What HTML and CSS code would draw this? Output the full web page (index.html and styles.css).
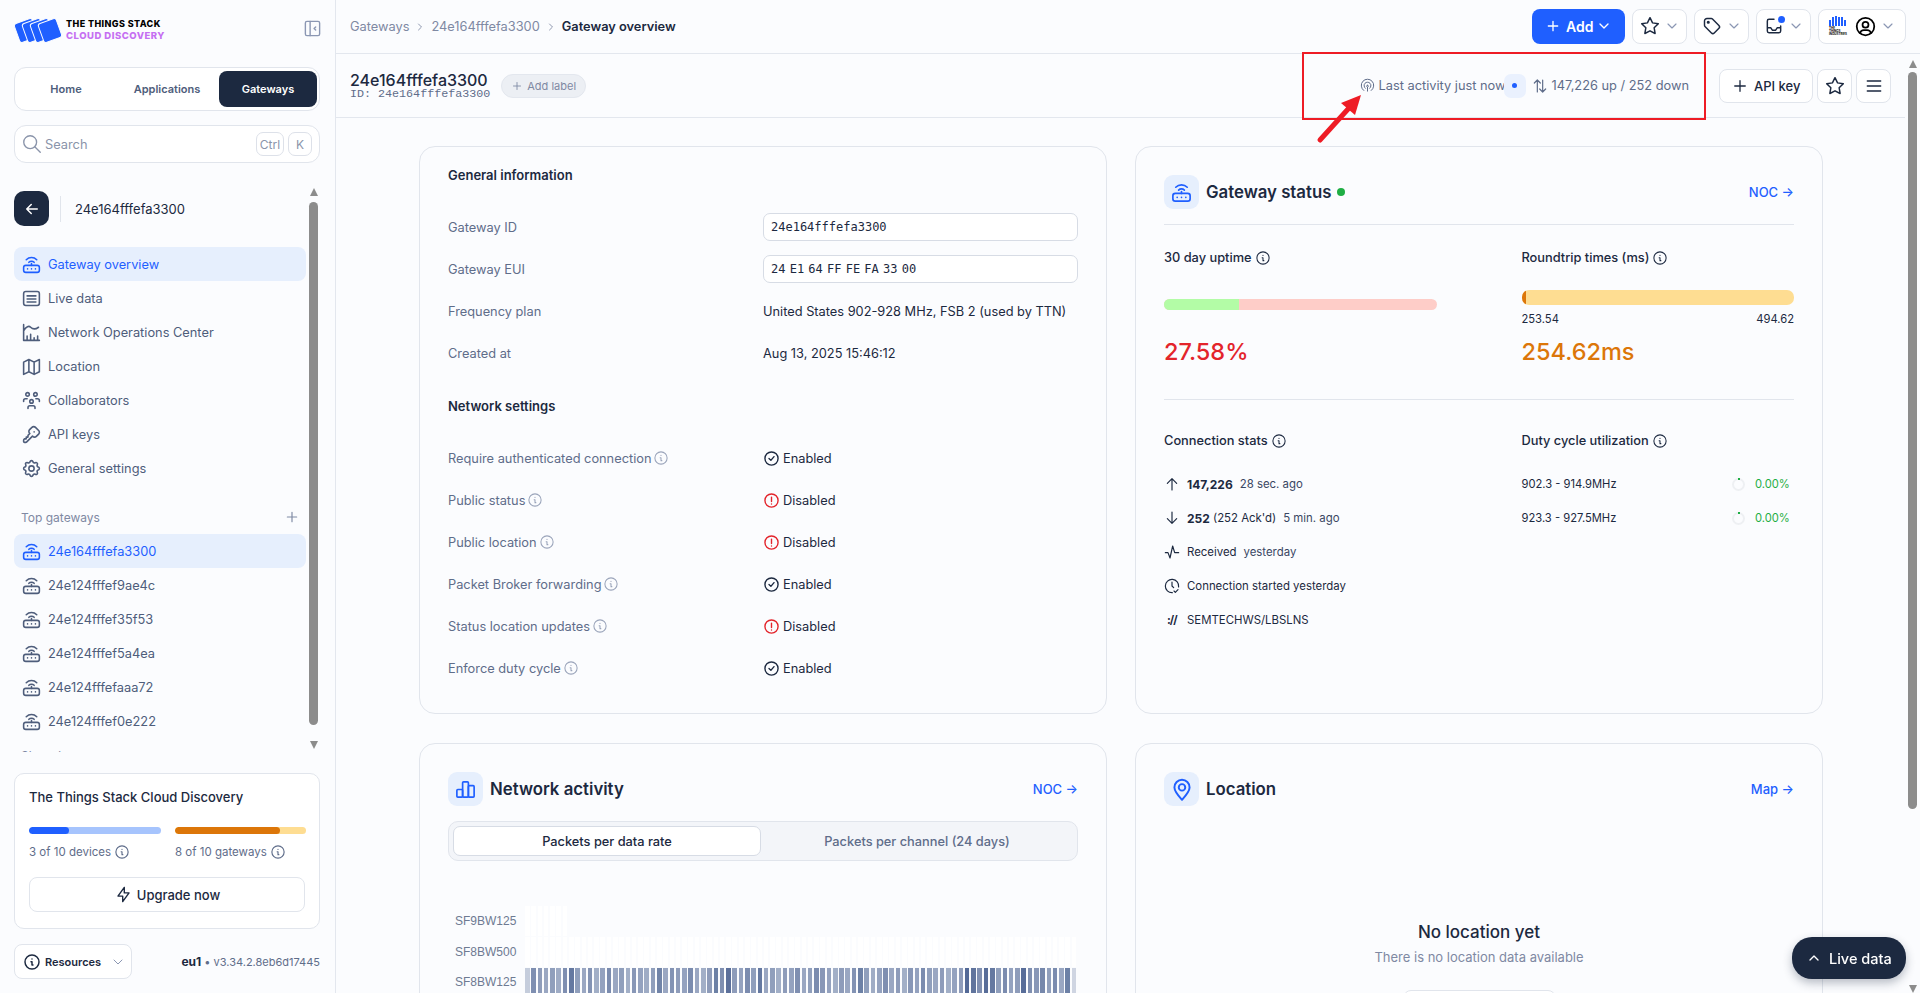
FILE: index.html
```html
<!DOCTYPE html>
<html lang="en">
<head>
    <meta charset="UTF-8">
    <meta name="viewport" content="width=device-width, initial-scale=1.0">
    <title>Gateway overview</title>
    <link rel="stylesheet" href="styles.css">
</head>
<body>

    <svg class="sprite" aria-hidden="true">
        <symbol id="i-router" viewBox="0 0 24 24"><rect x="3" y="13" width="18" height="8" rx="2.5"/><path d="M7.5 17h.01M12 17h.01M16.500 17h.01M12 13v-2M9 9.500a4.200 4.200 0 0 1 6 0M6 6.500a8.500 8.500 0 0 1 12 0"/></symbol>
        <symbol id="i-list" viewBox="0 0 24 24"><rect x="3" y="4" width="18" height="16" rx="2.500"/><path d="M7 9h10M7 12.500h10M7 16h10"/></symbol>
        <symbol id="i-noc" viewBox="0 0 24 24"><path d="M3 3v18h18M7 21v-5M11 21v-7M15 21v-3M19 21v-5M3 10c3-5 6-6 8-4s5 3 9 0"/></symbol>
        <symbol id="i-map" viewBox="0 0 24 24"><path d="M3 7l6-3 6 3 6-3v14l-6 3-6-3-6 3zM9 4v14M15 7v14"/></symbol>
        <symbol id="i-users" viewBox="0 0 24 24"><circle cx="12" cy="13" r="2"/><path d="M8 21v-1a2 2 0 0 1 2-2h4a2 2 0 0 1 2 2v1"/><circle cx="7.500" cy="5" r="2"/><circle cx="16.500" cy="5" r="2"/><path d="M3 13v-1a2 2 0 0 1 2-2h2M21 13v-1a2 2 0 0 0-2-2h-2"/></symbol>
        <symbol id="i-key" viewBox="0 0 24 24"><path d="M16.555 3.843l3.602 3.602a2.877 2.877 0 0 1 0 4.069l-2.643 2.643a2.877 2.877 0 0 1-4.069 0l-.301-.301-6.558 6.558a2 2 0 0 1-1.239.578l-.175.008h-1.172a1 1 0 0 1-.993-.883l-.007-.117v-1.172a2 2 0 0 1 .467-1.284l.119-.135.414-.414h2v-2h2v-2l2.144-2.144-.301-.301a2.877 2.877 0 0 1 0-4.069l2.643-2.643a2.877 2.877 0 0 1 4.069 0zM15 9h.01"/></symbol>
        <symbol id="i-gear" viewBox="0 0 24 24"><path d="M10.325 4.317c.426-1.756 2.924-1.756 3.350 0a1.724 1.724 0 0 0 2.573 1.066c1.543-.94 3.310.826 2.370 2.370a1.724 1.724 0 0 0 1.065 2.572c1.756.426 1.756 2.924 0 3.350a1.724 1.724 0 0 0-1.066 2.573c.94 1.543-.826 3.310-2.370 2.370a1.724 1.724 0 0 0-2.572 1.065c-.426 1.756-2.924 1.756-3.350 0a1.724 1.724 0 0 0-2.573-1.066c-1.543.94-3.310-.826-2.370-2.370a1.724 1.724 0 0 0-1.065-2.572c-1.756-.426-1.756-2.924 0-3.350a1.724 1.724 0 0 0 1.066-2.573c-.94-1.543.826-3.310 2.370-2.370 1 .608 2.296.07 2.572-1.065z"/><circle cx="12" cy="12" r="3"/></symbol>
        <symbol id="i-info" viewBox="0 0 24 24"><circle cx="12" cy="12" r="10.500"/><path d="M12 7.500h.01M10.500 11.500H12v5h1.500"/></symbol>
        <symbol id="i-check" viewBox="0 0 24 24"><circle cx="12" cy="12" r="10.500"/><path d="M8 12l3 3 5-6"/></symbol>
        <symbol id="i-alert" viewBox="0 0 24 24"><circle cx="12" cy="12" r="10.500"/><path d="M12 6.500v7M12 17.500h.01"/></symbol>
        <symbol id="i-plus" viewBox="0 0 24 24"><path d="M12 5v14M5 12h14"/></symbol>
        <symbol id="i-chev" viewBox="0 0 24 24"><path d="M6 9l6 6 6-6"/></symbol>
        <symbol id="i-chevr" viewBox="0 0 24 24"><path d="M9 6l6 6-6 6"/></symbol>
        <symbol id="i-star" viewBox="0 0 24 24"><path d="M12 17.750l-6.172 3.245 1.179-6.873-5-4.867 6.900-1 3.086-6.253 3.086 6.253 6.900 1-5 4.867 1.179 6.873z"/></symbol>
        <symbol id="i-tag" viewBox="0 0 24 24"><circle cx="7.500" cy="7.500" r="1"/><path d="M3 6v5.172a2 2 0 0 0 .586 1.414l7.710 7.710a2.410 2.410 0 0 0 3.408 0l5.592-5.592a2.410 2.410 0 0 0 0-3.408l-7.710-7.710a2 2 0 0 0-1.414-.586h-5.172a3 3 0 0 0-3 3z"/></symbol>
        <symbol id="i-inbox" viewBox="0 0 24 24"><path d="M12 4H6a2 2 0 0 0-2 2v12a2 2 0 0 0 2 2h12a2 2 0 0 0 2-2v-6M4 14h4l2 3h4l2-3h4"/></symbol>
        <symbol id="i-user" viewBox="0 0 24 24"><circle cx="12" cy="12" r="10"/><circle cx="12" cy="10" r="3.400"/><path d="M5.800 19.500c.6-2.300 2.200-3.500 4.200-3.500h4c2 0 3.600 1.200 4.200 3.500"/></symbol>
        <symbol id="i-menu" viewBox="0 0 24 24"><path d="M4 6h16M4 12h16M4 18h16"/></symbol>
        <symbol id="i-signal" viewBox="0 0 24 24"><path d="M6 20a10 10 0 1 1 12 0M8.500 16.500a5.500 5.500 0 1 1 7 0"/><path d="M12 11.500a1.500 1.500 0 0 1 1 2.500M11 14a1.500 1.500 0 0 1 1-2.500M12 15v6"/></symbol>
        <symbol id="i-updown" viewBox="0 0 24 24"><path d="M8 21V3M3.500 7.500L8 3l4.500 4.500M16 3v18M11.500 16.500L16 21l4.500-4.500"/></symbol>
        <symbol id="i-up" viewBox="0 0 24 24"><path d="M12 21V4M5 11l7-7 7 7"/></symbol>
        <symbol id="i-down" viewBox="0 0 24 24"><path d="M12 3v17M5 13l7 7 7-7"/></symbol>
        <symbol id="i-pulse" viewBox="0 0 24 24"><path d="M2 13h4l3 8 4-18 3 10h6"/></symbol>
        <symbol id="i-clock" viewBox="0 0 24 24"><path d="M21.900 13.500a10 10 0 1 0-9.400 8.500M12 6v6l2.500 2.500M15 19.500l2 2 4-4"/></symbol>
        <symbol id="i-search" viewBox="0 0 24 24"><circle cx="10" cy="10" r="7"/><path d="M21 21l-6-6"/></symbol>
        <symbol id="i-left" viewBox="0 0 24 24"><path d="M5 12h14M5 12l6-6M5 12l6 6"/></symbol>
        <symbol id="i-bolt" viewBox="0 0 24 24"><path d="M13 3v7h6l-8 11v-7H5z"/></symbol>
        <symbol id="i-bars" viewBox="0 0 24 24"><rect x="3" y="12" width="6" height="8" rx="1"/><rect x="9" y="4" width="6" height="16" rx="1"/><rect x="15" y="8" width="6" height="12" rx="1"/></symbol>
        <symbol id="i-pin" viewBox="0 0 24 24"><circle cx="12" cy="10.500" r="3"/><path d="M12 22c-4-4.500-7-8-7-11.500a7 7 0 0 1 14 0C19 14 16 17.500 12 22z"/></symbol>
        <symbol id="i-panel" viewBox="0 0 24 24"><rect x="3" y="3" width="18" height="18" rx="2"/><path d="M9 3v18M16 10l-2 2 2 2"/></symbol>
    </svg>

    <div class="app">

        <aside class="sidebar">
            <div class="brand">
                <div class="logo">
                    <i class="logoCard"></i><i class="logoCard"></i><i class="logoCard"></i><i class="logoCard"></i>
                </div>
                <div class="brandText">
                    <p>THE THINGS STACK</p>
                    <p class="brandSub">CLOUD DISCOVERY</p>
                </div>
                <svg class="ico collapse"><use href="#i-panel"/></svg>
            </div>

            <div class="tabs">
                <p>Home</p>
                <p>Applications</p>
                <p class="tabOn">Gateways</p>
            </div>

            <div class="search">
                <svg class="ico searchIco"><use href="#i-search"/></svg>
                <span class="searchText">Search</span>
                <kbd class="kbdCtrl">Ctrl</kbd>
                <kbd class="kbdK">K</kbd>
            </div>

            <div class="sideScroll">
                <div class="sideList">
                    <div class="backRow">
                        <div class="backBtn"><svg class="ico"><use href="#i-left"/></svg></div>
                        <span>24e164fffefa3300</span>
                    </div>

                    <nav class="nav">
                        <a class="navItem navOn"><svg class="ico"><use href="#i-router"/></svg>Gateway overview</a>
                        <a class="navItem"><svg class="ico"><use href="#i-list"/></svg>Live data</a>
                        <a class="navItem"><svg class="ico"><use href="#i-noc"/></svg>Network Operations Center</a>
                        <a class="navItem"><svg class="ico"><use href="#i-map"/></svg>Location</a>
                        <a class="navItem"><svg class="ico"><use href="#i-users"/></svg>Collaborators</a>
                        <a class="navItem"><svg class="ico"><use href="#i-key"/></svg>API keys</a>
                        <a class="navItem"><svg class="ico"><use href="#i-gear"/></svg>General settings</a>
                    </nav>

                    <div class="navHead">
                        <span>Top gateways</span>
                        <svg class="ico"><use href="#i-plus"/></svg>
                    </div>

                    <nav class="nav">
                        <a class="navItem navOn"><svg class="ico"><use href="#i-router"/></svg>24e164fffefa3300</a>
                        <a class="navItem"><svg class="ico"><use href="#i-router"/></svg>24e124fffef9ae4c</a>
                        <a class="navItem"><svg class="ico"><use href="#i-router"/></svg>24e124fffef35f53</a>
                        <a class="navItem"><svg class="ico"><use href="#i-router"/></svg>24e124fffef5a4ea</a>
                        <a class="navItem"><svg class="ico"><use href="#i-router"/></svg>24e124fffefaaa72</a>
                        <a class="navItem"><svg class="ico"><use href="#i-router"/></svg>24e124fffef0e222</a>
                    </nav>

                    <div class="navHead navClip"><span>Shared</span></div>
                </div>

                <div class="rail railSide">
                    <i class="arrowUp"></i>
                    <i class="thumb thumbSide"></i>
                    <i class="arrowDown"></i>
                </div>
            </div>

            <div class="plan">
                <p class="planTitle">The Things Stack Cloud Discovery</p>
                <div class="planBars">
                    <div>
                        <div class="meter meterBlue"><i class="meterFill meterDevices"></i></div>
                        <p class="planNote">3 of 10 devices <svg class="ico"><use href="#i-info"/></svg></p>
                    </div>
                    <div>
                        <div class="meter meterOrange"><i class="meterFill meterGateways"></i></div>
                        <p class="planNote">8 of 10 gateways <svg class="ico"><use href="#i-info"/></svg></p>
                    </div>
                </div>
                <div class="upgrade"><svg class="ico"><use href="#i-bolt"/></svg>Upgrade now</div>
            </div>

            <div class="sideFoot">
                <div class="resources">
                    <svg class="ico"><use href="#i-info"/></svg>
                    <span>Resources</span>
                    <svg class="ico chev"><use href="#i-chev"/></svg>
                </div>
                <p class="version"><b>eu1</b> • v3.34.2.8eb6d17445</p>
            </div>
        </aside>

        <div class="main">
            <header class="topbar">
                <div class="crumbs">
                    <span>Gateways</span>
                    <svg class="ico"><use href="#i-chevr"/></svg>
                    <span>24e164fffefa3300</span>
                    <svg class="ico"><use href="#i-chevr"/></svg>
                    <b>Gateway overview</b>
                </div>
                <div class="topBtns">
                    <div class="addBtn"><svg class="ico"><use href="#i-plus"/></svg>Add<svg class="ico"><use href="#i-chev"/></svg></div>
                    <div class="iconBtn"><svg class="ico big"><use href="#i-star"/></svg><svg class="ico chev"><use href="#i-chev"/></svg></div>
                    <div class="iconBtn"><svg class="ico big"><use href="#i-tag"/></svg><svg class="ico chev"><use href="#i-chev"/></svg></div>
                    <div class="iconBtn inbox"><svg class="ico big"><use href="#i-inbox"/></svg><i class="inboxDot"></i><svg class="ico chev"><use href="#i-chev"/></svg></div>
                    <div class="iconBtn userBtn">
                        <div class="org">
                            <div class="orgBars"><i></i><i></i><i></i><i></i><i></i><i></i></div>
                            <p>THE THINGS INDUSTRIES</p>
                        </div>
                        <svg class="ico big userIco"><use href="#i-user"/></svg>
                        <svg class="ico chev"><use href="#i-chev"/></svg>
                    </div>
                </div>
            </header>

            <div class="body">
                <div class="page">
                    <div class="pageBar">
                        <div class="pageId">
                            <h1>24e164fffefa3300</h1>
                            <p>ID: 24e164fffefa3300</p>
                        </div>
                        <div class="addLabel"><svg class="ico"><use href="#i-plus"/></svg>Add label</div>
                        <div class="activity">
                            <svg class="ico signal"><use href="#i-signal"/></svg>
                            <span>Last activity just now</span>
                            <span class="halo"><i></i></span>
                            <svg class="ico updown"><use href="#i-updown"/></svg>
                            <span>147,226 up / 252 down</span>
                        </div>
                        <div class="apiBtn"><svg class="ico"><use href="#i-plus"/></svg>API key</div>
                        <div class="squareBtn"><svg class="ico"><use href="#i-star"/></svg></div>
                        <div class="squareBtn"><svg class="ico"><use href="#i-menu"/></svg></div>
                    </div>

                    <div class="cards">
                        <section class="card cardInfo">
                            <h3>General information</h3>
                            <div class="rows">
                                <div class="row"><span>Gateway ID</span><div class="copyBox">24e164fffefa3300</div></div>
                                <div class="row"><span>Gateway EUI</span><div class="copyBox">24 E1 64 FF FE FA 33 00</div></div>
                                <div class="row"><span>Frequency plan</span><p>United States 902-928 MHz, FSB 2 (used by TTN)</p></div>
                                <div class="row"><span>Created at</span><p>Aug 13, 2025 15:46:12</p></div>
                            </div>
                            <h3 class="secondHead">Network settings</h3>
                            <div class="rows">
                                <div class="row"><span>Require authenticated connection <svg class="ico"><use href="#i-info"/></svg></span><p class="flag"><svg class="ico"><use href="#i-check"/></svg>Enabled</p></div>
                                <div class="row"><span>Public status <svg class="ico"><use href="#i-info"/></svg></span><p class="flag flagOff"><svg class="ico"><use href="#i-alert"/></svg>Disabled</p></div>
                                <div class="row"><span>Public location <svg class="ico"><use href="#i-info"/></svg></span><p class="flag flagOff"><svg class="ico"><use href="#i-alert"/></svg>Disabled</p></div>
                                <div class="row"><span>Packet Broker forwarding <svg class="ico"><use href="#i-info"/></svg></span><p class="flag"><svg class="ico"><use href="#i-check"/></svg>Enabled</p></div>
                                <div class="row"><span>Status location updates <svg class="ico"><use href="#i-info"/></svg></span><p class="flag flagOff"><svg class="ico"><use href="#i-alert"/></svg>Disabled</p></div>
                                <div class="row"><span>Enforce duty cycle <svg class="ico"><use href="#i-info"/></svg></span><p class="flag"><svg class="ico"><use href="#i-check"/></svg>Enabled</p></div>
                            </div>
                        </section>

                        <section class="card">
                            <div class="cardHead headLine">
                                <div class="headIco"><svg class="ico"><use href="#i-router"/></svg></div>
                                <h2>Gateway status</h2>
                                <i class="greenDot"></i>
                                <a class="cardLink">NOC →</a>
                            </div>
                            <div class="stats statsTop">
                                <div>
                                    <p class="statHead">30 day uptime <svg class="ico"><use href="#i-info"/></svg></p>
                                    <div class="uptime"><i></i></div>
                                    <p class="bigNum red">27.58%</p>
                                </div>
                                <div>
                                    <p class="statHead">Roundtrip times (ms) <svg class="ico"><use href="#i-info"/></svg></p>
                                    <div class="rtt"><i></i></div>
                                    <div class="rttEnds"><span>253.54</span><span>494.62</span></div>
                                    <p class="bigNum orange">254.62ms</p>
                                </div>
                            </div>
                            <div class="stats">
                                <div>
                                    <p class="statHead">Connection stats <svg class="ico"><use href="#i-info"/></svg></p>
                                    <div class="connList">
                                        <p><svg class="ico"><use href="#i-up"/></svg><b>147,226</b><span class="gapL">28 sec. ago</span></p>
                                        <p><svg class="ico"><use href="#i-down"/></svg><b>252</b>&nbsp;(252 Ack'd)<span class="gapL">5 min. ago</span></p>
                                        <p><svg class="ico"><use href="#i-pulse"/></svg>Received<span class="gapL">yesterday</span></p>
                                        <p><svg class="ico"><use href="#i-clock"/></svg>Connection started yesterday</p>
                                        <p><span class="proto">://</span>SEMTECHWS/LBSLNS</p>
                                    </div>
                                </div>
                                <div>
                                    <p class="statHead">Duty cycle utilization <svg class="ico"><use href="#i-info"/></svg></p>
                                    <div class="connList">
                                        <p class="duty"><span>902.3 - 914.9MHz</span><i class="ring"></i><span class="dutyPct">0.00%</span></p>
                                        <p class="duty"><span>923.3 - 927.5MHz</span><i class="ring"></i><span class="dutyPct">0.00%</span></p>
                                    </div>
                                </div>
                            </div>
                        </section>

                        <section class="card">
                            <div class="cardHead">
                                <div class="headIco"><svg class="ico"><use href="#i-bars"/></svg></div>
                                <h2>Network activity</h2>
                                <a class="cardLink">NOC →</a>
                            </div>
                            <div class="switcher">
                                <p class="switchOn">Packets per data rate</p>
                                <p>Packets per channel (24 days)</p>
                            </div>
                            <div class="heat">
                                <div class="heatLabels">
                                    <span>SF9BW125</span>
                                    <span>SF8BW500</span>
                                    <span>SF8BW125</span>
                                </div>
                                <div class="heatGrid" id="heat"></div>
                            </div>
                        </section>

                        <section class="card">
                            <div class="cardHead">
                                <div class="headIco headPin"><svg class="ico"><use href="#i-pin"/></svg></div>
                                <h2>Location</h2>
                                <a class="cardLink">Map →</a>
                            </div>
                            <div class="empty">
                                <p class="emptyTitle">No location yet</p>
                                <p class="emptySub">There is no location data available</p>
                                <div class="emptyBtn">Add location</div>
                            </div>
                        </section>
                    </div>
                </div>

                <div class="rail railMain">
                    <i class="arrowUp"></i>
                    <i class="thumb thumbMain"></i>
                    <i class="arrowDown"></i>
                </div>
            </div>
        </div>
    </div>

    <div class="liveBtn"><svg class="ico"><use href="#i-chev"/></svg>Live data</div>

    <!-- annotation on the screenshot -->
    <div class="markBox"></div>
    <svg class="markArrow" viewBox="0 0 50 54">
        <path d="M4 50L33 18" stroke="#ee1c25" stroke-width="5" stroke-linecap="round"/>
        <path d="M45 5L25 13L39 25z" fill="#ee1c25"/>
    </svg>

    <script src="chart.js"></script>
</body>
</html>
```
FILE: styles.css
```css
* {
    box-sizing: border-box;
}

body {
    margin: 0px;
    height: 100vh;
    overflow: hidden;
    background-color: #fbfcfe;
    color: #1c2940;
    font-family: Inter, "Noto Sans", sans-serif;
    font-size: 12.8px;
}

p, h1, h2, h3 {
    margin: 0px;
}

i {
    display: block;
}

.sprite {
    display: none;
}

.ico {
    width: 16px;
    height: 16px;
    flex: none;
    fill: none;
    stroke: currentColor;
    stroke-width: 1.75;
    stroke-linecap: round;
    stroke-linejoin: round;
}

.app {
    display: flex;
    height: 100vh;
}

/* sidebar */
.sidebar {
    width: 336px;
    flex: none;
    padding: 0px 15px 0px 14px;
    border-right: 1px solid #e3e7ee;
    overflow: hidden;
}

.brand {
    display: flex;
    align-items: center;
    height: 67px;
    padding-bottom: 7px;
}

.logo {
    display: flex;
    width: 48px;
    padding-left: 2px;
}

.logoCard {
    width: 20px;
    height: 21px;
    margin-right: -12px;
    border-radius: 3px;
    border: 1px solid #fbfcfe;
    background-color: #1f5fff;
    transform: rotate(-20deg);
    flex: none;
}

.brandText {
    margin-left: 4px;
    font-size: 9px;
    font-weight: 800;
    line-height: 12.500px;
    letter-spacing: 0.4px;
    color: #000000;
}

.brandSub {
    font-size: 9.5px;
    letter-spacing: 0.500px;
    color: #c56ff2;
}

.collapse {
    margin-left: auto;
    width: 19px;
    height: 19px;
    color: #8b97b3;
    margin-top: -3px;
    margin-right: -2px;
}

.tabs {
    display: grid;
    grid-template-columns: 1fr 1fr 1fr;
    gap: 3px;
    height: 44px;
    padding: 3px 2px;
    border: 1px solid #e1e5ec;
    border-radius: 12px;
    background-color: #ffffff;
    font-size: 11px;
    font-weight: 600;
    color: #4e5d7b;
}

.tabs p {
    display: flex;
    align-items: center;
    justify-content: center;
    border-radius: 8px;
}

.tabs .tabOn {
    background-color: #1c2940;
    color: #ffffff;
}

.search {
    display: flex;
    align-items: center;
    gap: 2px;
    height: 38px;
    margin-top: 14px;
    padding: 0px 7px 0px 6px;
    border: 1px solid #e1e5ec;
    border-radius: 12px;
    background-color: #ffffff;
    color: #8a94aa;
}

.searchIco {
    width: 22px;
    height: 22px;
    stroke-width: 1.5;
}

.searchText {
    flex: 1;
}

kbd {
    display: flex;
    align-items: center;
    justify-content: center;
    height: 24px;
    margin-left: 2px;
    border: 1px solid #dde1e9;
    border-radius: 7px;
    font-family: Inter, sans-serif;
    font-size: 12px;
}

.kbdCtrl {
    width: 28px;
}

.kbdK {
    width: 24px;
}

.sideScroll {
    display: flex;
    height: 569px;
    margin-top: 20px;
    overflow: hidden;
}

.sideList {
    width: 292px;
    flex: none;
}

.backRow {
    display: flex;
    align-items: center;
    height: 35px;
    margin-top: 8px;
    font-size: 13px;
}

.backRow span {
    border-left: 1px solid #e1e5ec;
    height: 26px;
    line-height: 26px;
    margin-left: 11px;
    padding-left: 14px;
}

.backBtn {
    display: flex;
    align-items: center;
    justify-content: center;
    width: 35px;
    height: 35px;
    border-radius: 10px;
    background-color: #1c2940;
    color: #ffffff;
}

.backBtn .ico {
    width: 18px;
    height: 18px;
    stroke-width: 2;
}

.nav:first-of-type {
    margin-top: 21px;
}

.navItem {
    display: flex;
    align-items: center;
    gap: 8px;
    height: 34px;
    padding-left: 8px;
    border-radius: 8px;
    color: #4e5d7b;
}

.navItem .ico {
    width: 21px;
    height: 21px;
    margin: 0px -1.500px;
    stroke-width: 1.800;
}

.navOn {
    background-color: #e6effd;
    color: #1f5fff;
}

.navHead {
    display: flex;
    align-items: center;
    justify-content: space-between;
    height: 34px;
    margin-top: 15px;
    padding: 0px 6px 0px 7px;
    font-size: 12px;
    color: #7f89a3;
}

.navClip {
    margin-top: 0px;
}

.rail {
    position: relative;
    flex: none;
    display: flex;
    flex-direction: column;
    align-items: center;
}

.railSide {
    width: 9px;
    margin-left: 3px;
    padding-top: 5px;
}

.arrowUp {
    width: 0px;
    height: 0px;
    border-left: 4.5px solid transparent;
    border-right: 4.5px solid transparent;
    border-bottom: 8px solid #8c8c8c;
}

.arrowDown {
    width: 0px;
    height: 0px;
    border-left: 4.5px solid transparent;
    border-right: 4.5px solid transparent;
    border-top: 8px solid #8c8c8c;
}

.thumb {
    width: 9px;
    border-radius: 5px;
    background-color: #8c8c8c;
}

.thumbSide {
    height: 523px;
    margin: 6px 0px 16px;
}

.plan {
    height: 156px;
    margin-top: 21px;
    padding: 14px;
    border: 1px solid #e1e5ec;
    border-radius: 10px;
    background-color: #ffffff;
}

.planTitle {
    font-size: 13px;
    font-weight: 500;
    line-height: 18px;
}

.planBars {
    display: grid;
    grid-template-columns: 132px 131px;
    gap: 14px;
    margin-top: 21px;
}

.meter {
    height: 7px;
    border-radius: 4px;
    overflow: hidden;
}

.meterFill {
    height: 7px;
    border-radius: 4px;
}

.meterBlue {
    background-color: #a6c4fd;
}

.meterOrange {
    background-color: #fedd92;
}

.meterDevices {
    width: 30%;
    background-color: #1f5fff;
}

.meterGateways {
    width: 80%;
    background-color: #dc7609;
}

.planNote {
    display: flex;
    align-items: center;
    gap: 4px;
    margin-top: 11px;
    font-size: 11.500px;
    color: #5f6d8a;
}

.planNote .ico {
    width: 14px;
    height: 14px;
    stroke-width: 2;
}

.upgrade {
    display: flex;
    align-items: center;
    justify-content: center;
    gap: 4px;
    height: 35px;
    margin-top: 18px;
    border: 1px solid #e1e5ec;
    border-radius: 8px;
    font-size: 13px;
    font-weight: 500;
}

.upgrade .ico {
    width: 19px;
    height: 19px;
}

.sideFoot {
    display: flex;
    align-items: center;
    justify-content: space-between;
    margin-top: 15px;
}

.resources {
    display: flex;
    align-items: center;
    gap: 5px;
    width: 118px;
    height: 35px;
    padding-left: 9px;
    border: 1px solid #e1e5ec;
    border-radius: 8px;
    background-color: #ffffff;
    font-size: 11px;
    font-weight: 600;
}

.resources .ico {
    stroke-width: 2.200;
}

.chev {
    width: 16px;
    height: 16px;
    color: #8b97b3;
}

.resources .chev {
    margin-left: 4px;
    stroke-width: 1.500;
}

.version {
    font-size: 11px;
    color: #5f6d8a;
}

.version b {
    font-size: 12px;
    color: #1c2940;
}

/* main */
.main {
    flex: 1;
    display: flex;
    flex-direction: column;
    min-width: 0px;
}

.topbar {
    display: flex;
    align-items: center;
    justify-content: space-between;
    height: 54px;
    flex: none;
    padding-left: 14px;
    border-bottom: 1px solid #e3e7ee;
}

.crumbs {
    display: flex;
    align-items: center;
    gap: 5px;
    color: #7f89a3;
}

.crumbs .ico {
    width: 12px;
    height: 12px;
}

.crumbs b {
    font-weight: 600;
    color: #1c2940;
}

.topBtns {
    display: flex;
    gap: 7px;
    padding-right: 14px;
    padding-bottom: 1px;
}

.addBtn {
    display: flex;
    align-items: center;
    gap: 3px;
    width: 93px;
    height: 35px;
    padding-left: 13px;
    border-radius: 8px;
    background-color: #1f5fff;
    color: #ffffff;
    font-size: 14px;
    font-weight: 600;
}

.addBtn .ico {
    margin-right: 2px;
    stroke-width: 2;
}

.iconBtn {
    position: relative;
    display: flex;
    align-items: center;
    gap: 4px;
    width: 55px;
    height: 35px;
    padding-left: 7px;
    border: 1px solid #e1e5ec;
    border-radius: 8px;
    background-color: #ffffff;
}

.big {
    width: 20px;
    height: 20px;
}

.inboxDot {
    position: absolute;
    left: 21px;
    top: 6px;
    width: 7px;
    height: 7px;
    border-radius: 50%;
    background-color: #1f5fff;
}

.userBtn {
    width: 88px;
    padding-left: 10px;
}

.userIco {
    margin-left: 5px;
    width: 21px;
    height: 21px;
    color: #000000;
    stroke-width: 2;
}

.org {
    width: 17px;
    flex: none;
}

.orgBars {
    display: flex;
    align-items: flex-end;
    justify-content: space-between;
    height: 10px;
}

.orgBars i {
    width: 2px;
    height: 9px;
    background-color: #1f5fff;
}

.orgBars i:nth-child(1), .orgBars i:nth-child(6) {
    height: 6px;
}

.orgBars i:nth-child(3) {
    height: 10px;
}

.org p {
    font-size: 3px;
    line-height: 3px;
    margin-top: 1px;
    font-weight: 700;
    color: #000000;
}

.body {
    flex: 1;
    display: flex;
    min-height: 0px;
}

.page {
    flex: 1;
    min-width: 0px;
}

.railMain {
    width: 15px;
    padding-top: 6px;
}

.thumbMain {
    height: 737px;
    margin: 4px 0px 176px;
}

.pageBar {
    display: flex;
    align-items: center;
    height: 64px;
    padding: 0px 14px;
    border-bottom: 1px solid #e3e7ee;
}

.pageId h1 {
    font-size: 16px;
    font-weight: 500;
    line-height: 16px;
}

.pageId p {
    font-family: "Liberation Mono", monospace;
    font-size: 11.7px;
    line-height: 12px;
    color: #5f6d8a;
}

.addLabel {
    display: flex;
    align-items: center;
    gap: 4px;
    height: 24px;
    margin-left: 11px;
    padding: 0px 9px;
    border: 1px solid #e3e7ee;
    border-radius: 12px;
    background-color: #eceff4;
    font-size: 11px;
    color: #7f89a3;
}

.addLabel .ico {
    width: 12px;
    height: 12px;
}

.activity {
    display: flex;
    align-items: center;
    margin-left: auto;
    margin-right: 30px;
    color: #5f6d8a;
}

.signal {
    width: 15px;
    height: 15px;
    margin-right: 4px;
    stroke-width: 1.600;
}

.updown {
    width: 16px;
    height: 16px;
    margin-right: 4px;
    stroke-width: 1.800;
}

.halo {
    display: flex;
    align-items: center;
    justify-content: center;
    width: 22px;
    height: 24px;
    margin: 0px 6px 0px -2px;
    border-radius: 7px;
    background-color: #eaf1fe;
}

.halo i {
    width: 5px;
    height: 5px;
    border-radius: 50%;
    background-color: #1f5fff;
}

.apiBtn {
    display: flex;
    align-items: center;
    gap: 5px;
    width: 94px;
    height: 34px;
    padding-left: 11px;
    border: 1px solid #e1e5ec;
    border-radius: 8px;
    background-color: #ffffff;
    font-size: 13px;
    font-weight: 500;
}

.apiBtn .ico {
    width: 18px;
    height: 18px;
}

.squareBtn {
    display: flex;
    align-items: center;
    justify-content: center;
    width: 35px;
    height: 34px;
    margin-left: 4px;
    border: 1px solid #e1e5ec;
    border-radius: 8px;
    background-color: #ffffff;
}

.squareBtn .ico {
    width: 20px;
    height: 20px;
}

.cards {
    display: grid;
    grid-template-columns: 688px 688px;
    gap: 29px 28px;
    padding-top: 28px;
    padding-left: 83px;
}

.card {
    padding: 28px 28px 0px;
    border: 1px solid #e1e5ec;
    border-radius: 16px;
}

.cardInfo {
    height: 568px;
    padding-top: 18px;
}

.card h3 {
    font-size: 13px;
    font-weight: 600;
    line-height: 20px;
}

.card .secondHead {
    margin-top: 22px;
}

.rows {
    margin-top: 21px;
}

.row {
    display: grid;
    grid-template-columns: 315px 315px;
    align-items: center;
    height: 42px;
}

.row span {
    display: flex;
    align-items: center;
    gap: 3px;
    color: #5f6d8a;
}

.row span .ico {
    width: 14px;
    height: 14px;
    stroke-width: 1.800;
    color: #9aa4ba;
}

.copyBox {
    display: flex;
    align-items: center;
    height: 28px;
    padding-left: 7px;
    border: 1px solid #d7dce5;
    border-radius: 7px;
    background-color: #ffffff;
    font-family: "DejaVu Sans Mono", monospace;
    font-size: 12px;
    word-spacing: -3px;
}

.flag {
    display: flex;
    align-items: center;
    gap: 4px;
    padding-left: 1px;
}

.flag .ico {
    width: 15px;
    height: 15px;
    stroke-width: 2.200;
}

.flagOff .ico {
    color: #e3242b;
}

.cardHead {
    display: flex;
    align-items: center;
    height: 34px;
}

.headLine {
    box-sizing: content-box;
    padding-bottom: 15px;
    border-bottom: 1px solid #e1e5ec;
}

.headIco {
    display: flex;
    align-items: center;
    justify-content: center;
    width: 35px;
    height: 34px;
    border-radius: 9px;
    background-color: #e6effd;
    color: #1f5fff;
}

.headIco .ico {
    width: 23px;
    height: 23px;
}

.headPin .ico {
    width: 26px;
    height: 26px;
    stroke-width: 1.800;
}

.cardHead h2 {
    margin-left: 7px;
    font-size: 16.800px;
    font-weight: 600;
}

.greenDot {
    width: 8px;
    height: 8px;
    margin-left: 6px;
    border-radius: 50%;
    background-color: #1fae44;
}

.cardLink {
    margin-left: auto;
    font-size: 13px;
    font-weight: 500;
    color: #1f5fff;
}

.stats {
    display: grid;
    grid-template-columns: 1fr 1fr;
    gap: 85px;
    padding-top: 31px;
}

.statsTop {
    height: 175px;
    padding-top: 23px;
    border-bottom: 1px solid #e1e5ec;
}

.statHead {
    display: flex;
    align-items: center;
    gap: 4px;
    line-height: 20px;
    font-weight: 500;
}

.statHead .ico {
    width: 14px;
    height: 14px;
    stroke-width: 1.800;
}

.uptime {
    height: 11px;
    margin-top: 31px;
    border-radius: 6px;
    background-color: #fecdc8;
    overflow: hidden;
}

.uptime i {
    width: 27.580%;
    height: 11px;
    background-color: #b3fca6;
}

.bigNum {
    margin-top: 26px;
    font-size: 23.500px;
    font-weight: 500;
    line-height: 32px;
}

.red {
    color: #e3242b;
}

.orange {
    color: #dc7609;
}

.rtt {
    height: 15px;
    margin-top: 22px;
    border-radius: 7px;
    background-color: #fedd92;
    overflow: hidden;
}

.rtt i {
    width: 4px;
    height: 15px;
    background-color: #dc7609;
}

.rttEnds {
    display: flex;
    justify-content: space-between;
    margin-top: 6px;
    font-size: 11.200px;
    line-height: 16px;
}

.rttEnds + .bigNum {
    margin-top: 9px;
}

.connList {
    margin-top: 16px;
    font-size: 11.400px;
}

.connList p {
    display: flex;
    align-items: center;
    height: 34px;
}

.connList .ico {
    width: 16px;
    height: 16px;
    margin-right: 7px;
}

.connList b {
    font-size: 12px;
    font-weight: 700;
}

.gapL {
    margin-left: 7px;
    color: #3a4763;
}

.proto {
    width: 23px;
    padding-left: 3px;
    font-weight: 700;
    letter-spacing: -1px;
}

.duty {
    font-size: 11.200px;
}

.ring {
    position: relative;
    width: 13px;
    height: 13px;
    margin-left: auto;
    margin-right: 10px;
    border: 2px solid #eef0f3;
    border-radius: 50%;
}

.ring::before {
    content: "";
    position: absolute;
    left: 3.500px;
    top: -2px;
    width: 2px;
    height: 2px;
    background-color: #1fae44;
}

.dutyPct {
    width: 39px;
    color: #1fae44;
}

.switcher {
    display: grid;
    grid-template-columns: 308px 1fr;
    height: 40px;
    margin-top: 15px;
    padding: 4px;
    border: 1px solid #e1e5ec;
    border-radius: 10px;
    background-color: #f3f5f9;
    font-weight: 500;
    color: #5f6d8a;
}

.switcher p {
    display: flex;
    align-items: center;
    justify-content: center;
    border-radius: 7px;
}

.switcher .switchOn {
    background-color: #ffffff;
    border: 1px solid #d7dce5;
    color: #1c2940;
}

.heat {
    display: flex;
    margin-top: 45px;
}

.heatLabels {
    display: flex;
    flex-direction: column;
    width: 77px;
    padding-left: 7px;
    font-family: "Liberation Sans", sans-serif;
    font-size: 12px;
    color: #6e7a92;
}

.heatLabels span {
    height: 30.500px;
    line-height: 30px;
}

.heatGrid {
    flex: 1;
    display: grid;
    grid-template-columns: repeat(88, 1fr);
    grid-auto-rows: 30px;
    row-gap: 1px;
}

.heatCell {
    margin-right: 1.700px;
    background-color: #ffffff;
}

.heatDark {
    background-color: #4a6190;
}

.empty {
    text-align: center;
}

.emptyTitle {
    margin-top: 113px;
    font-size: 17px;
    font-weight: 500;
    line-height: 26px;
}

.emptySub {
    margin-top: 2px;
    font-size: 13px;
    line-height: 20px;
    color: #7f89a3;
}

.emptyBtn {
    width: 153px;
    height: 36px;
    margin: 23px auto 0px;
    line-height: 36px;
    border: 1px solid #e1e5ec;
    border-radius: 8px;
    background-color: #ffffff;
}

/* floats over the page */
.liveBtn {
    position: fixed;
    left: 1792px;
    top: 937px;
    display: flex;
    align-items: center;
    gap: 7px;
    width: 114px;
    height: 42px;
    padding-left: 14px;
    border-radius: 20px;
    background-color: #1c2940;
    color: #ffffff;
    font-size: 14.500px;
    font-weight: 500;
    box-shadow: 0px 4px 10px rgba(28, 41, 64, 0.3);
}

.liveBtn .ico {
    transform: rotate(180deg);
    stroke-width: 2;
}

.markBox {
    position: fixed;
    left: 1302px;
    top: 52px;
    width: 404px;
    height: 68px;
    border: 2px solid #ee1c25;
}

.markArrow {
    position: fixed;
    left: 1316px;
    top: 90px;
    width: 50px;
    height: 54px;
}
```
FILE: chart.js
```js
// tints of the bottom row, one per column
var tints = [
    30, 70, 62, 55, 60, 52, 70, 85, 60, 55, 68, 50, 58, 72, 55, 60,
    50, 65, 58, 52, 60, 78, 55, 68, 62, 58, 72, 55, 50, 62, 80, 70,
    90, 62, 58, 72, 60, 85, 55, 60, 50, 62, 58, 70, 55, 60, 72, 65,
    58, 50, 62, 55, 68, 80, 60, 52, 58, 70, 55, 62, 50, 65, 58, 72,
    60, 55, 62, 50, 58, 62, 95, 88, 70, 92, 85, 60, 72, 58, 62, 92,
    70, 65, 75, 60, 72, 55, 80, 25
];

var heat = document.getElementById("heat");

for (var row = 0; row < 3; row++) {
    for (var col = 0; col < 88; col++) {
        var cell = document.createElement("i");
        cell.className = "heatCell";
        if (row == 2) {
            cell.className = "heatCell heatDark";
            cell.style.opacity = tints[col] / 100;
        }
        if (row == 0 && col > 6) {
            cell.style.opacity = 0;
        }
        heat.appendChild(cell);
    }
}
```
